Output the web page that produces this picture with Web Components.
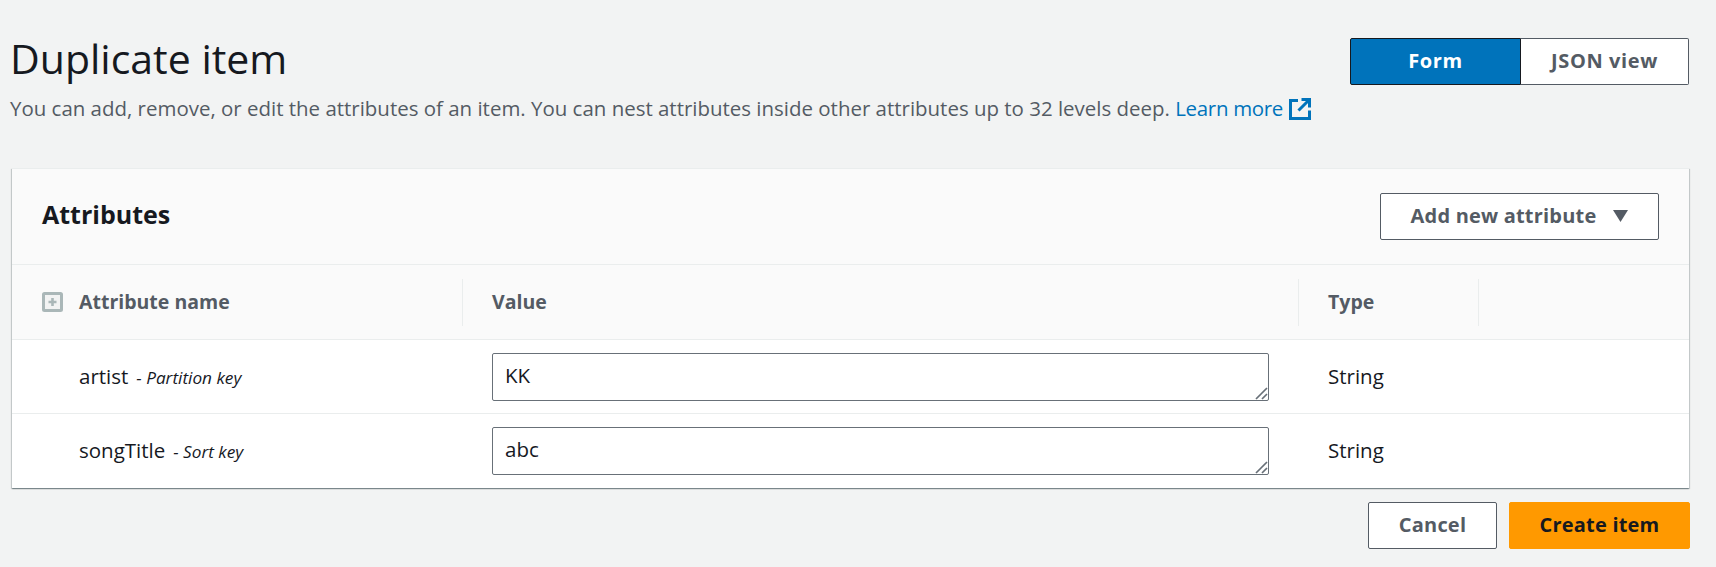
<!DOCTYPE html>
<html lang="en">
<head>
<meta charset="utf-8">
<title>Duplicate item</title>
<style>
    html, body { margin: 0; background: #f2f3f3; }
    body { font-family: "Open Sans", "Noto Sans", sans-serif; color: #16191f; }
    attr-card { --attr-cols: 450px 836px 180px 1fr; }
</style>
</head>
<body>
<item-page>
    <page-header slot="header" title="Duplicate item">
        You can add, remove, or edit the attributes of an item. You can nest attributes inside other attributes up to 32 levels deep.
    </page-header>
    <attr-card slot="card">
        <attr-row name="artist" keytype="Partition key" value="KK" type="String"></attr-row>
        <attr-row name="songTitle" keytype="Sort key" value="abc" type="String"></attr-row>
    </attr-card>
    <div slot="actions" style="display:flex;gap:12px;">
        <aws-button style="width:129px">Cancel</aws-button>
        <aws-button variant="primary" style="width:181px">Create item</aws-button>
    </div>
</item-page>

<script>
class ItemPage extends HTMLElement {
    connectedCallback() {
        this.attachShadow({ mode: 'open' });
        this.shadowRoot.innerHTML = `
            <style>
                :host { display: block; padding: 38px 27px 0 12px; }
                .actions { display: flex; justify-content: flex-end; margin: 14px -1px 0 0; }
            </style>
            <slot name="header"></slot>
            <slot name="card"></slot>
            <div class="actions"><slot name="actions"></slot></div>
        `;
    }
}

class AwsButton extends HTMLElement {
    connectedCallback() {
        this.attachShadow({ mode: 'open' });
        this.shadowRoot.innerHTML = `
            <style>
                :host { display: inline-block; }
                button {
                    box-sizing: border-box;
                    width: 100%;
                    height: 47px;
                    display: flex;
                    align-items: center;
                    justify-content: center;
                    gap: 17px;
                    padding: 0 0 2px;
                    background: #fff;
                    color: #545b64;
                    border: 1px solid #545b64;
                    border-radius: 2px;
                    font: 700 20px "Open Sans", sans-serif;
                    letter-spacing: 0.2px;
                    cursor: pointer;
                }
                :host([variant="primary"]) button {
                    background: #ff9900;
                    border-color: #ff9900;
                    color: #16191f;
                }
            </style>
            <button><slot></slot></button>
        `;
    }
}

class SegControl extends HTMLElement {
    connectedCallback() {
        this.attachShadow({ mode: 'open' });
        this.shadowRoot.innerHTML = `
            <style>
                :host { display: flex; flex: none; height: 47px; font: 700 20px "Open Sans", sans-serif; letter-spacing: 0.6px; }
                div { box-sizing: border-box; display: flex; align-items: center; justify-content: center; padding-bottom: 2px; }
                .on {
                    width: 171px;
                    background: #0073bb;
                    color: #fff;
                    border: 1px solid #16191f;
                    border-radius: 2px 0 0 2px;
                }
                .off {
                    width: 168px;
                    background: #fff;
                    color: #545b64;
                    border: 1px solid #545b64;
                    border-left: 0;
                    border-radius: 0 2px 2px 0;
                }
            </style>
            <div class="on">Form</div>
            <div class="off">JSON view</div>
        `;
    }
}

class PageHeader extends HTMLElement {
    connectedCallback() {
        const title = this.getAttribute('title') || '';
        this.attachShadow({ mode: 'open' });
        this.shadowRoot.innerHTML = `
            <style>
                :host { display: flex; justify-content: space-between; align-items: flex-start; height: 130px; margin-left: -2px; }
                h1 { margin: -1px 0 0; font-weight: 400; font-size: 41px; line-height: 42px; color: #16191f; }
                p { margin: 16px 0 0; font-size: 20.47px; line-height: 26px; color: #545b64; white-space: nowrap; }
                a { color: #0073bb; text-decoration: none; letter-spacing: -0.3px; }
                svg { width: 22px; height: 22px; vertical-align: -4px; margin-left: 6px; }
            </style>
            <div>
                <h1>${title}</h1>
                <p><slot></slot> <a href="#">Learn more<svg viewBox="0 0 22 22" fill="none" stroke="#0073bb" stroke-width="3"><path d="M9 2.5H1.5v18h19V12.5"/><path d="M12.5 1.5h8v8"/><path d="M20 2L9.5 12.5"/></svg></a></p>
            </div>
            <seg-control></seg-control>
        `;
    }
}

class AttrCard extends HTMLElement {
    connectedCallback() {
        this.attachShadow({ mode: 'open' });
        this.shadowRoot.innerHTML = `
            <style>
                :host {
                    display: block;
                    background: #fff;
                    border-top: 1px solid #eaeded;
                    box-shadow: 0 1px 1px 0 rgba(0,28,36,.3), 1px 1px 1px 0 rgba(0,28,36,.15), -1px 1px 1px 0 rgba(0,28,36,.15);
                }
                .head {
                    display: flex;
                    justify-content: space-between;
                    align-items: center;
                    height: 96px;
                    box-sizing: border-box;
                    padding: 0 30px 0 30px;
                    background: #fafafa;
                    border-bottom: 1px solid #eaeded;
                }
                h2 { margin: 0 0 6px; font-size: 25px; font-weight: 700; color: #16191f; }
                .cols {
                    display: grid;
                    grid-template-columns: var(--attr-cols);
                    height: 75px;
                    align-items: center;
                    background: #fafafa;
                    box-sizing: border-box;
                    border-bottom: 1px solid #eaeded;
                    font-size: 19.5px;
                    font-weight: 700;
                    color: #545b64;
                }
                .cols > div { height: 47px; display: flex; align-items: center; box-sizing: border-box; padding-bottom: 1px; }
                .cols > div + div { border-left: 1px solid #eaeded; padding-left: 29px; }
                .first { padding-left: 30px; gap: 16px; }
                svg.plus { width: 21px; height: 20px; }
                .tri { width: 15px; height: 12px; }
            </style>
            <div class="head">
                <h2>Attributes</h2>
                <aws-button style="width:279px">Add new attribute<svg class="tri" viewBox="0 0 15 12"><path d="M0 0h15L7.5 12z" fill="#545b64"/></svg></aws-button>
            </div>
            <div class="cols">
                <div class="first">
                    <svg class="plus" viewBox="0 0 21 20">
                        <rect x="1.5" y="1.5" width="18" height="17" fill="#f2f3f3" stroke="#aab7b8" stroke-width="3" rx="1"/>
                        <path d="M10.5 6v8M6.5 10h8" stroke="#aab7b8" stroke-width="2.6"/>
                    </svg>
                    Attribute name
                </div>
                <div>Value</div>
                <div>Type</div>
                <div></div>
            </div>
            <slot></slot>
        `;
    }
}

class AttrRow extends HTMLElement {
    connectedCallback() {
        const name = this.getAttribute('name') || '';
        const keytype = this.getAttribute('keytype') || '';
        const value = this.getAttribute('value') || '';
        const type = this.getAttribute('type') || '';
        this.attachShadow({ mode: 'open' });
        this.shadowRoot.innerHTML = `
            <style>
                :host {
                    display: grid;
                    grid-template-columns: var(--attr-cols);
                    align-items: center;
                    height: 74px;
                    font-size: 20.5px;
                    color: #16191f;
                    box-sizing: border-box;
                    border-bottom: 1px solid #eaeded;
                }
                :host(:last-child) { border-bottom: 0; }
                .name { padding: 0 0 2px 67px; }
                .key { font-size: 17.2px; font-style: italic; margin-left: 8px; }
                .val { padding-left: 30px; display: flex; }
                textarea {
                    box-sizing: border-box;
                    width: 777px;
                    height: 48px;
                    margin: 0;
                    padding: 6px 12px;
                    font: 20.5px/30px "Open Sans", sans-serif;
                    color: #16191f;
                    background: #fff;
                    border: 1px solid #687078;
                    border-radius: 2px;
                    outline: none;
                }
                textarea::-webkit-resizer {
                    background: url("data:image/svg+xml,%3Csvg xmlns='http://www.w3.org/2000/svg' width='15' height='15'%3E%3Cpath d='M3 14L14 3M9 14l5-5' stroke='%23687078' stroke-width='1.7'/%3E%3C/svg%3E") no-repeat;
                }
                .type { padding: 0 0 2px 30px; }
            </style>
            <div class="name">${name}<span class="key">- ${keytype}</span></div>
            <div class="val"><textarea spellcheck="false">${value}</textarea></div>
            <div class="type">${type}</div>
            <div></div>
        `;
    }
}

customElements.define('item-page', ItemPage);
customElements.define('aws-button', AwsButton);
customElements.define('seg-control', SegControl);
customElements.define('page-header', PageHeader);
customElements.define('attr-card', AttrCard);
customElements.define('attr-row', AttrRow);
</script>
</body>
</html>
